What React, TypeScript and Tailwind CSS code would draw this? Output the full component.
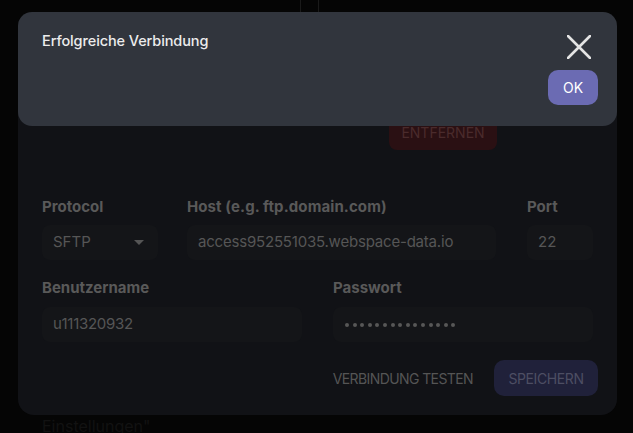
import React from "react";

export default function App() {
  const font = { fontFamily: "Inter, 'Noto Sans', sans-serif" };
  return (
    <div className="relative w-[633px] h-[433px] overflow-hidden bg-[#050505]" style={font}>
      {/* faint page content behind */}
      <div className="absolute left-[300px] top-0 w-[1px] h-[12px] bg-[#1a1a1a]" />
      <div className="absolute left-[318px] top-0 w-[1px] h-[12px] bg-[#1a1a1a]" />
      <div className="absolute left-[42px] top-[414px] text-[16px] text-[#121212]">Einstellungen"</div>

      {/* dialog */}
      <div className="absolute left-[18px] top-[40px] w-[599px] h-[375px] rounded-[16px] bg-[#111216] px-[24px] pt-[74px] flex flex-col">
        <div className="flex justify-end pr-[96px]">
          <div className="h-[36px] w-[108px] rounded-[8px] bg-[#2a1013] flex items-center justify-center text-[14px] text-[#4a2b2c]">
            ENTFERNEN
          </div>
        </div>
        <div className="mt-[46px] flex gap-[29px]">
          <div className="flex flex-col w-[116px]">
            <div className="text-[15px] font-bold text-[#595959] leading-[22px] tracking-[0px]">Protocol</div>
            <div className="mt-[7px] h-[35px] rounded-[8px] bg-[#141518] flex items-center justify-between pl-[11px] pr-[14px]">
              <span className="text-[15px] text-[#565656]">SFTP</span>
              <svg width="10" height="6" viewBox="0 0 10 6"><path d="M0 0 L10 0 L5 5 Z" fill="#555" /></svg>
            </div>
          </div>
          <div className="flex flex-col w-[309px]">
            <div className="text-[15px] font-bold text-[#595959] leading-[22px] tracking-[0.1px]">Host (e.g. ftp.domain.com)</div>
            <div className="mt-[7px] h-[35px] rounded-[8px] bg-[#141518] flex items-center pl-[11px]">
              <span className="text-[15px] text-[#565656] tracking-[-0.2px]">access952551035.webspace-data.io</span>
            </div>
          </div>
          <div className="flex flex-col w-[66px] ml-[2px]">
            <div className="text-[15px] font-bold text-[#595959] leading-[22px] tracking-[0px]">Port</div>
            <div className="mt-[7px] h-[35px] rounded-[8px] bg-[#141518] flex items-center pl-[11px]">
              <span className="text-[15px] text-[#565656]">22</span>
            </div>
          </div>
        </div>
        <div className="mt-[17px] flex gap-[31px]">
          <div className="flex flex-col w-[260px]">
            <div className="text-[15px] font-bold text-[#595959] leading-[22px] tracking-[0px]">Benutzername</div>
            <div className="mt-[8px] h-[35px] rounded-[8px] bg-[#141518] flex items-center pl-[11px]">
              <span className="text-[15px] text-[#565656] tracking-[-0.3px]">u111320932</span>
            </div>
          </div>
          <div className="flex flex-col w-[260px]">
            <div className="text-[15px] font-bold text-[#595959] leading-[22px] tracking-[0px]">Passwort</div>
            <div className="mt-[8px] h-[35px] rounded-[8px] bg-[#141518] flex items-center pl-[12px] gap-[3.6px]">
              {Array.from({ length: 15 }).map((_, i) => (
                <span key={i} className="w-[4px] h-[4px] rounded-full bg-[#575757]" />
              ))}
            </div>
          </div>
        </div>
        <div className="mt-[18px] flex items-center justify-end gap-[21px] -mr-[5px]">
          <span className="text-[14px] text-[#555] tracking-[-0.6px]">VERBINDUNG TESTEN</span>
          <div className="h-[36px] w-[104px] rounded-[10px] bg-[#20213a] flex items-center justify-center text-[14px] text-[#4d4e63] tracking-[-0.4px]">
            SPEICHERN
          </div>
        </div>
      </div>

      {/* toast */}
      <div className="absolute left-[18px] top-[12px] w-[599px] h-[114px] rounded-[14px] bg-[#31353d] flex justify-between pl-[24px] pr-[19px] pt-[19px]">
        <div className="text-[14.5px] font-medium text-[#ececec] leading-[20px] tracking-[-0.1px]">Erfolgreiche Verbindung</div>
        <div className="flex flex-col items-end">
          <svg width="24" height="24" viewBox="0 0 24 24" className="mt-[4px] mr-[7px]">
            <path d="M1 1 L23 23 M23 1 L1 23" stroke="#e4e4e4" strokeWidth="2.6" strokeLinecap="round" />
          </svg>
          <div className="mt-[11px] h-[35px] w-[50px] rounded-[10px] bg-[#6b6bb3] flex items-center justify-center text-[14px] text-white">
            OK
          </div>
        </div>
      </div>
    </div>
  );
}
